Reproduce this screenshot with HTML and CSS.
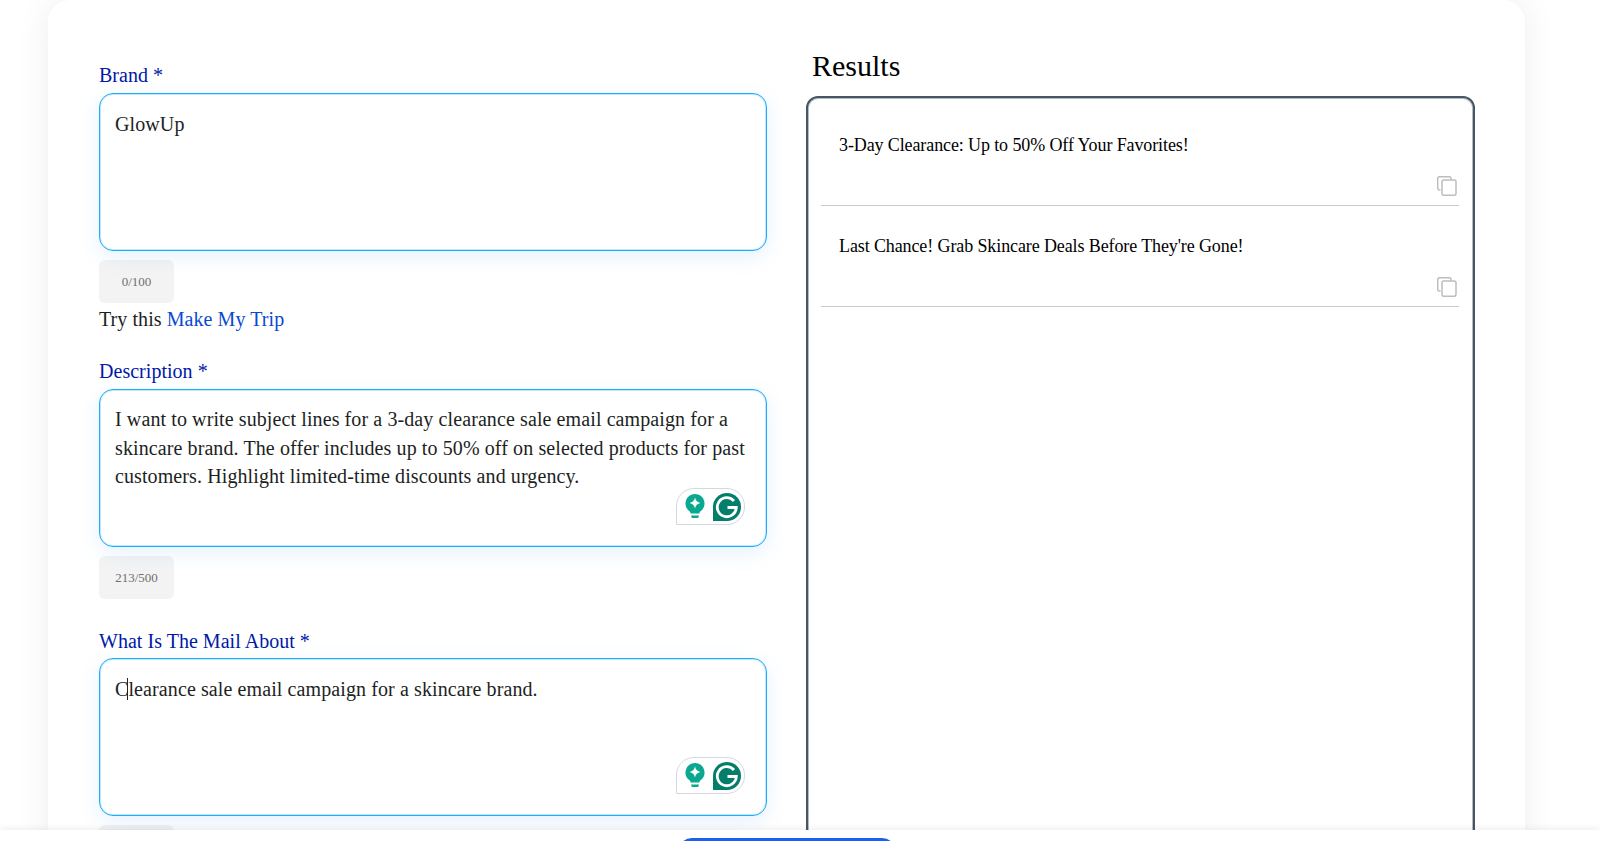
FILE: index.html
```html
<!DOCTYPE html>
<html lang="en">
<head>
<meta charset="utf-8">
<title>Subject line generator</title>
<link rel="stylesheet" href="styles.css">
</head>
<body>
<div class="app">
  <main class="stage">
    <div class="card">
      <section class="form">
        <div class="field">
          <label class="label">Brand *</label>
          <div class="input"><p class="value">GlowUp</p></div>
          <div class="counter">0/100</div>
          <p class="hint">Try this <a class="hint-link">Make My Trip</a></p>
        </div>
        <div class="field field-desc">
          <label class="label">Description *</label>
          <div class="input">
            <p class="value">I want to write subject lines for a 3-day clearance sale email campaign for a skincare brand. The offer includes up to 50% off on selected products for past customers. Highlight limited-time discounts and urgency.</p>
            <div class="grammarly">
              <svg class="g-bulb" viewBox="0 0 20 26"><path fill="#0aa88f" d="M10 0a9.500 9.500 0 0 1 5.500 17.200c-.8.6-1 1.300-1 2.300h-9c0-1-.2-1.700-1-2.300A9.500 9.500 0 0 1 10 0z"/><path fill="#0aa88f" d="M6 21.500h8l-.8 2.500H6.800z"/><path fill="#fff" d="M10 3.500c.5 3 2.500 5 5.500 5.500-3 .5-5 2.500-5.500 5.500-.5-3-2.500-5-5.500-5.500 3-.5 5-2.500 5.500-5.500z"/></svg>
              <svg class="g-mark" viewBox="0 0 28 28"><path fill="#047d6b" d="M14 0a14 14 0 0 1 0 28H0V14A14 14 0 0 1 14 0z"/><path fill="none" stroke="#fff" stroke-width="2.800" d="M21 8a9.500 9.500 0 1 0 2.300 6.500H14.500"/></svg>
            </div>
          </div>
          <div class="counter">213/500</div>
        </div>
        <div class="field field-mail">
          <label class="label">What Is The Mail About *</label>
          <div class="input">
            <p class="value"><span class="caret-wrap">C<span class="caret"></span></span>learance sale email campaign for a skincare brand.</p>
            <div class="grammarly">
              <svg class="g-bulb" viewBox="0 0 20 26"><path fill="#0aa88f" d="M10 0a9.500 9.500 0 0 1 5.500 17.200c-.8.6-1 1.300-1 2.300h-9c0-1-.2-1.700-1-2.300A9.500 9.500 0 0 1 10 0z"/><path fill="#0aa88f" d="M6 21.500h8l-.8 2.500H6.800z"/><path fill="#fff" d="M10 3.500c.5 3 2.500 5 5.500 5.500-3 .5-5 2.500-5.500 5.500-.5-3-2.500-5-5.500-5.500 3-.5 5-2.500 5.500-5.500z"/></svg>
              <svg class="g-mark" viewBox="0 0 28 28"><path fill="#047d6b" d="M14 0a14 14 0 0 1 0 28H0V14A14 14 0 0 1 14 0z"/><path fill="none" stroke="#fff" stroke-width="2.800" d="M21 8a9.500 9.500 0 1 0 2.300 6.500H14.500"/></svg>
            </div>
          </div>
          <div class="counter"></div>
        </div>
      </section>
      <section class="results">
        <h2 class="results-title">Results</h2>
        <div class="results-box">
          <article class="result">
            <p class="result-text">3-Day Clearance: Up to 50% Off Your Favorites!</p>
            <svg class="copy" viewBox="0 0 20 20"><path fill="none" stroke="#bdbdbd" stroke-width="1.500" d="M14 3.500V2.500a1.800 1.800 0 0 0-1.800-1.800H2.500A1.800 1.800 0 0 0 .7 2.500v9.700A1.800 1.800 0 0 0 2.500 14h1"/><rect x="5" y="4" width="14" height="15.300" rx="1.800" fill="none" stroke="#bdbdbd" stroke-width="1.500"/></svg>
          </article>
          <article class="result">
            <p class="result-text">Last Chance! Grab Skincare Deals Before They're Gone!</p>
            <svg class="copy" viewBox="0 0 20 20"><path fill="none" stroke="#bdbdbd" stroke-width="1.500" d="M14 3.500V2.500a1.800 1.800 0 0 0-1.800-1.800H2.500A1.800 1.800 0 0 0 .7 2.500v9.700A1.800 1.800 0 0 0 2.500 14h1"/><rect x="5" y="4" width="14" height="15.300" rx="1.800" fill="none" stroke="#bdbdbd" stroke-width="1.500"/></svg>
          </article>
        </div>
      </section>
    </div>
  </main>
  <footer class="bottom-bar"><div class="primary-button"></div></footer>
</div>
</body>
</html>
```
FILE: styles.css
```css
* { box-sizing: border-box; }
html, body { margin: 0; height: 100%; overflow: hidden; background: #fff; }
body { font-family: "Liberation Serif", "Times New Roman", serif; color: #1d1f23; }
.app { height: 841px; display: flex; flex-direction: column; overflow: hidden; }
.stage { height: 830px; flex: none; padding: 0 75px 0 48px; overflow: hidden; background: #fff; }
.card {
  width: 1477px; height: 900px; background: #fff;
  border-radius: 22px 22px 0 0;
  box-shadow: 0 0 34px rgba(0,0,0,.07);
  padding: 0 50px 0 51px;
  display: grid; grid-template-columns: 668px 669px; column-gap: 39px;
}
.form { display: flex; flex-direction: column; padding-top: 63px; }
.field { display: flex; flex-direction: column; }
.field-desc { margin-top: 28px; }
.field-mail { margin-top: 30px; }
.label { font-size: 20px; line-height: 25px; height: 30px; color: #0019a8; letter-spacing: .03px; }
.field-mail .label { height: 29px; }
.input {
  position: relative; height: 158px;
  border: 1px solid #1fadfb; border-radius: 14px; background: #fff;
  padding: 16px 15px 15px;
  box-shadow: inset 0 0 0 1px rgba(47,180,250,.3), 0 6px 20px rgba(47,150,245,.12);
}
.field-desc .input { padding-top: 15px; }
.value { margin: 0; font-size: 20px; line-height: 28.600px; color: #1d1f23; letter-spacing: .1px; }
.counter {
  width: 75px; height: 43px; margin-top: 9px; border-radius: 6px;
  background: #f3f3f3; color: #6f6f6f; font-size: 13px;
  display: flex; align-items: center; justify-content: center;
}
.hint { margin: 4px 0 0; font-size: 20px; line-height: 24px; color: #1d1f23; letter-spacing: .07px; }
.hint-link { color: #0b49d2; }
.caret-wrap { position: relative; }
.caret { position: absolute; right: 0; top: 0; width: 1px; height: 22px; background: #222; }
.grammarly {
  position: absolute; right: 21px; bottom: 21px;
  width: 69px; height: 37px;
  display: flex; align-items: center; gap: 8px; padding-left: 8px;
  background: #fff; border: 1px solid #d5d8df;
  border-radius: 18px 18px 18px 0;
}
.g-bulb { width: 20px; height: 26px; flex: none; }
.g-mark { width: 28px; height: 28px; flex: none; }
.results { display: flex; flex-direction: column; padding-top: 48px; }
.results-title { margin: 0 0 0 6px; font-size: 30px; font-weight: 400; line-height: 36px; height: 48px; color: #000; }
.results-box {
  height: 760px; border: 2px solid #465664; border-radius: 12px;
  padding: 7px 14px 0 13px; background: #fff;
  box-shadow: inset 0 0 0 1px rgba(70,86,100,.4);
}
.result { position: relative; height: 101px; border-bottom: 1px solid #c9c9c9; padding: 28px 18px 0; }
.result-text { margin: 0; font-size: 18px; line-height: 24px; color: #000; letter-spacing: -.11px; }
.copy { position: absolute; right: 2px; bottom: 9px; width: 20px; height: 20px; }
.bottom-bar { height: 11px; flex: none; background: #fff; position: relative; box-shadow: 0 -2px 6px rgba(0,0,0,.06); overflow: hidden; }
.primary-button { position: absolute; left: 678px; top: 8px; width: 218px; height: 30px; border-radius: 14px; background: #1d5fee; }
```
